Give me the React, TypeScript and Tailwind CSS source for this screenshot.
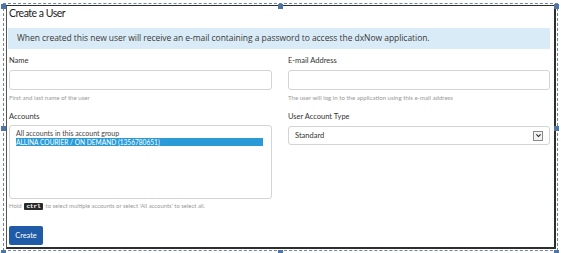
const font = { fontFamily: "Lato, 'Liberation Sans', sans-serif" };

function Handle({ className }: { className: string }) {
  return <span className={`absolute size-[5px] bg-[#4f74a8] ${className}`} />;
}

function Field({
  label,
  hint,
}: {
  label: string;
  hint: string;
}) {
  return (
    <div className="flex flex-col">
      <label className="mt-[7px] text-[7.5px] leading-[10px] text-[#333]">{label}</label>
      <div className="mt-[4px] h-[20px] rounded-[3px] border border-[#d4d4d4] bg-white" />
      <p className="mt-[4px] text-[6.1px] leading-[8px] text-[#999]">{hint}</p>
    </div>
  );
}

export default function App() {
  return (
    <div className="relative h-[253px] w-[561px] bg-white" style={font}>
      <div className="ml-[3px] mt-[3px] h-[248px] w-[555px] border border-dashed border-[#6d86a8] pb-[1px] pl-[2px] pr-[1px] pt-[1px]">
        <div className="h-full border border-[#2e2e2e] border-b-2 border-r-2 border-l-[#555] bg-white pl-[2px] pr-[4px]">
          <h1 className="h-[14px] text-[10.5px] leading-[14px] tracking-[-0.5px] text-[#222]">Create a User</h1>

          <div
            className="-ml-[1px] mt-[8px] flex h-[21px] items-center bg-[#d9ebf6] pl-[9px] text-[8.5px] tracking-[-0.05px] text-[#3a3a3a]"
            style={{ fontFamily: "'Open Sans', Lato, sans-serif" }}
          >
            When created this new user will receive an e-mail containing a password to access the dxNow application.
          </div>

          <div className="grid grid-cols-[263px_262px] gap-x-[16px]">
            <Field label="Name" hint="First and last name of the user" />
            <Field label="E-mail Address" hint="The user will log in to the application using this e-mail address" />

            <div className="flex flex-col">
              <label className="mt-[10px] text-[7.5px] leading-[10px] text-[#333]">Accounts</label>
              <div className="mt-[3px] h-[74px] rounded-[3px] border border-[#d4d4d4] bg-white pl-[6px] pr-[8px] pt-[3px] leading-[8px]">
                <div className="text-[7px] text-[#444]">All accounts in this account group</div>
                <div className="mt-[0.5px] bg-[#2b9bd8] text-[6.6px] text-white">ALLINA COURIER / ON DEMAND (1356780651)</div>
              </div>
            </div>

            <div className="flex flex-col">
              <label className="mt-[10px] text-[7.5px] leading-[10px] text-[#333]">User Account Type</label>
              <div className="mt-[4px] flex h-[19px] items-center justify-between rounded-[3px] border border-[#d4d4d4] bg-white pl-[6px] pr-[6px] text-[7.5px] text-[#333]">
                <span>Standard</span>
                <span className="flex size-[10px] items-center justify-center border border-[#888] bg-[#f2f2f2]">
                  <svg viewBox="0 0 10 10" className="size-[7px]">
                    <path d="M2 3.5 L5 6.5 L8 3.5" fill="none" stroke="#222" strokeWidth="1.6" />
                  </svg>
                </span>
              </div>
            </div>
          </div>

          <p className="mt-[3px] flex items-center gap-[3px] text-[5.9px] leading-[8px] text-[#999]">
            <span>Hold</span>
            <span className="rounded-[1px] bg-[#2a2a2a] px-[2px] font-bold leading-[7px] text-white" style={{ fontFamily: "'Liberation Mono', monospace" }}>
              ctrl
            </span>
            <span>to select multiple accounts or select 'All accounts' to select all.</span>
          </p>

          <button className="mt-[16px] h-[19px] w-[34px] rounded-[2px] bg-[#1f5ba7] text-[7.4px] text-white">
            Create
          </button>
        </div>
      </div>

      <Handle className="left-[1px] top-[1px]" />
      <Handle className="left-[278px] top-[1px]" />
      <Handle className="left-[554px] top-[1px]" />
      <Handle className="left-[1px] top-[123px]" />
      <Handle className="left-[554px] top-[123px]" />
      <Handle className="left-[1px] top-[247px]" />
      <Handle className="left-[278px] top-[247px]" />
      <Handle className="left-[554px] top-[247px]" />
    </div>
  );
}
